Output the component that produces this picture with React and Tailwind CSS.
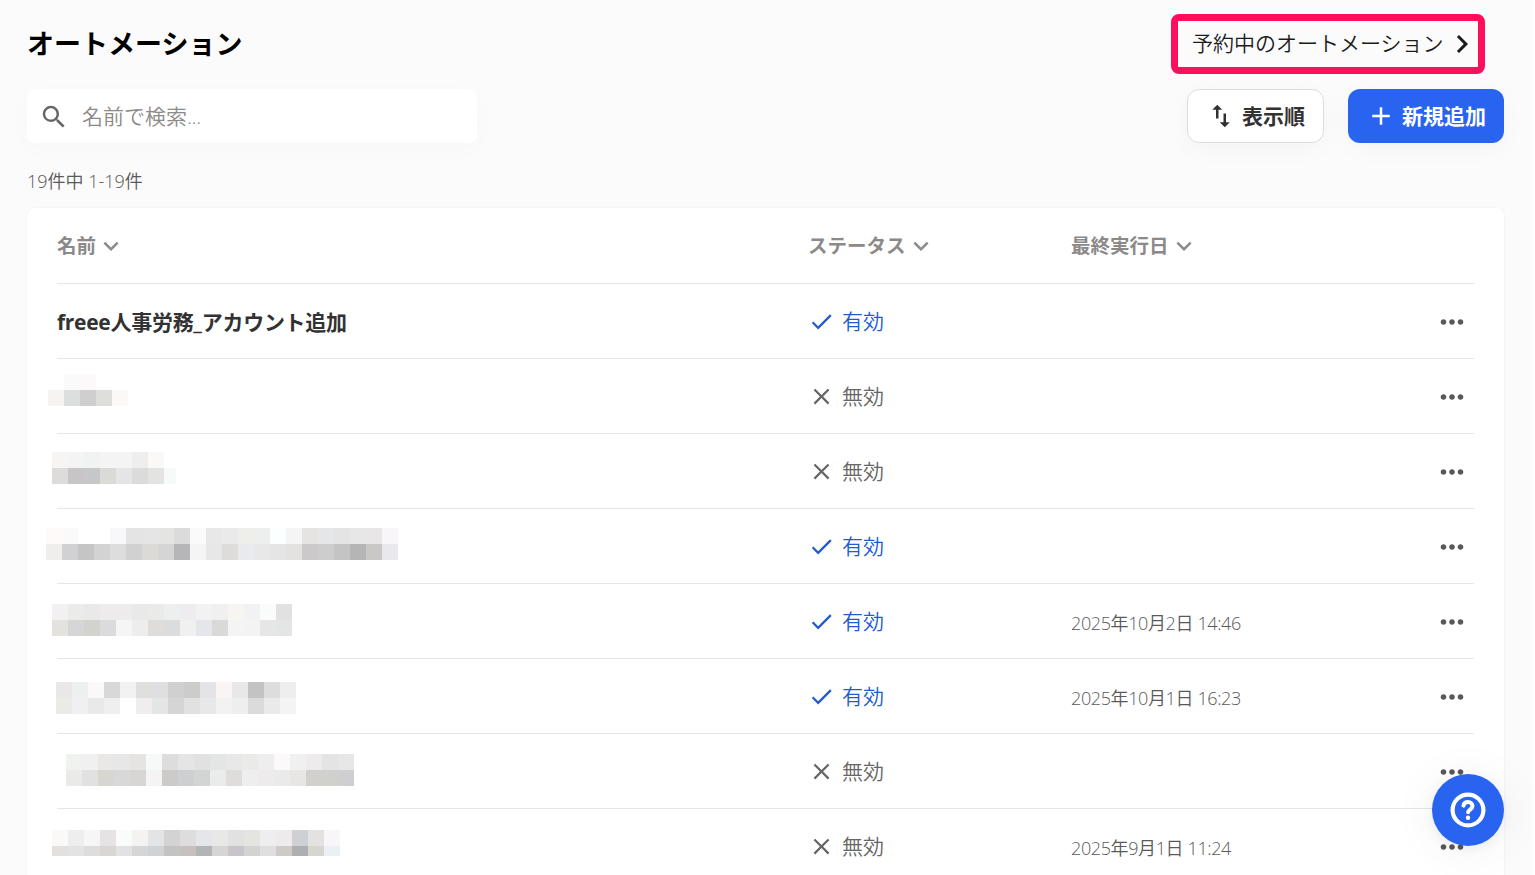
import {
  MdAdd,
  MdCheck,
  MdChevronRight,
  MdClose,
  MdKeyboardArrowDown,
  MdMoreHoriz,
  MdSearch,
  MdSwapVert,
} from "react-icons/md";

const GRID = "grid grid-cols-[751px_263px_1fr_45px] items-center border-b border-[#e6e6e6]";

// masked names are stored as rows of 16px cells
const rows = [
  { name: "freee人事労務_アカウント追加", active: true },
  {
    mask: {
      left: -9, top: 15, last: 16,
      cells: ["#ffffff #fafafa #fbf9fa #ffffff #ffffff", "#f5f4f2 #dcdfde #cfcfcf #dededc #faf9f7"],
    },
  },
  {
    mask: {
      left: -5, top: 18, last: 16,
      cells: [
        "#f6f5f3 #f4f4f4 #f1f2f2 #f4f4f4 #f4f4f4 #eeeeee #faf9f7 #ffffff",
        "#dddcda #c8c5c7 #c6c7c9 #dadad7 #e5e5e5 #dbdbdb #e3e3e1 #f6faf9",
      ],
      trim: true,
    },
  },
  {
    active: true,
    mask: {
      left: -11, top: 19, last: 16,
      cells: [
        "#fffafa #fafafa #ffffff #ffffff #f8f7fa #e4e4e4 #e5e5e5 #e4e4e2 #dbdbdb #fafafa #e8e8e8 #eaeaea #eeeeeb #edefee #fbffff #f5f5f5 #e5e4e2 #e5e6e8 #e4e4e4 #e7e7e7 #e8e6e7 #f8f6f9",
        "#efeeec #d1d1d3 #c5c5c5 #d3d3d3 #dddddd #d1d1d1 #dbdad7 #d5d5d5 #b6b6b8 #f5f5f5 #e7e7e7 #dddcda #e9eaed #e8e8e8 #e5e5e5 #e3e2e0 #ccc9ca #cdcdcd #c4c4c4 #b5b5b5 #c9c8c5 #e8e8ed",
      ],
    },
  },
  {
    active: true,
    date: "2025年10月2日 14:46",
    mask: {
      left: -5, top: 20, last: 16,
      cells: [
        "#f2f0f1 #ebebe9 #e9e9e9 #edebec #edebec #e9e9e9 #eaeae8 #edefee #eeecee #f2f2f2 #f0f0f0 #f6f5f2 #f2f2f2 #fafcfb #e1e1e1",
        "#e3e2df #d6d6d6 #d2d2cf #dbdbdc #f5f5f5 #ededed #dedddb #dadcde #f0f0f0 #e4e6e9 #d9d9d9 #f4f4f4 #f3f3f3 #e6e6e6 #e3e6e4",
      ],
    },
  },
  {
    active: true,
    date: "2025年10月1日 16:23",
    mask: {
      left: -1, top: 23, last: 16,
      cells: [
        "#e9e8e6 #edf0ef #faf9f7 #d8d8d8 #f2f2f2 #dfdfdd #dddfe1 #d0d0d0 #cdcccb #e4e4e8 #faf5f4 #e8e8e8 #c4c3c1 #dddddd #edefee",
        "#eaeae7 #f0f0f3 #e9e9e9 #edf0ef #ffffff #efeeec #e3e6e4 #d5d5d5 #e1e1e1 #e7e8ea #f2f2f2 #eeeeee #dbdbdb #e9ebea #f4f4f2",
      ],
    },
  },
  {
    mask: {
      left: 9, top: 20, last: 16,
      cells: [
        "#eff2ef #f0f0f0 #e9e8e6 #e7e7e7 #e5e4e2 #f5faf8 #dddddd #e5e5e5 #e1e1e1 #e4e6e5 #e8e8e8 #eaeae8 #eeeeee #fbf9fa #f0f0f0 #edebec #e4e4e4 #e7e7e7",
        "#eaeae8 #e1e1e1 #d7d6d1 #d8d8d8 #d7d6d4 #f4f4f4 #cccbc9 #cecfd2 #d3d5d4 #eaeceb #dfdddc #eeeeee #edebec #eaeaea #e7e6e4 #d1d0cd #d0d0cc #cfced3",
      ],
    },
  },
  {
    date: "2025年9月1日 11:24",
    mask: {
      left: -5, top: 21, last: 10,
      cells: [
        "#faf9f7 #eeeeee #f6f6f6 #e5e3e4 #fafcfb #f4f3f1 #e3e4e6 #d3d3d3 #dddddd #e5e6e9 #e8e8e8 #e1e1e1 #e4e4e1 #eeeeee #edebec #cfd0d3 #e3e2e0 #f8f6f9",
        "#e2e1df #e3e3e3 #dddddd #d9d7d6 #e2e2e5 #d6d6d6 #d1d2d4 #c3c3c3 #c6c1c0 #b3b4b6 #d5d5d5 #c7c5c9 #d3d3d3 #dfdfdf #cccbc8 #aeafb1 #d6d6d0 #ebf0f4",
      ],
    },
  },
];

function Mask({ left, top, last, cells, trim }) {
  return (
    <div style={{ marginLeft: left, paddingTop: top }}>
      {cells.map((line, row) => (
        <div key={row} className="flex" style={{ height: row === cells.length - 1 ? last : 16 }}>
          {line.split(" ").map((color, i, all) => (
            <span
              key={i}
              className="h-full"
              style={{ width: trim && i === all.length - 1 ? 12 : 16, backgroundColor: color }}
            />
          ))}
        </div>
      ))}
    </div>
  );
}

function HeaderCell({ children }) {
  return (
    <div className="flex items-center text-[19.5px] font-bold text-[#8c8989]">
      {children}
      <MdKeyboardArrowDown size={30} />
    </div>
  );
}

function Status({ active }) {
  const Icon = active ? MdCheck : MdClose;
  return (
    <div className={active ? "flex items-center text-[#205bd0]" : "flex items-center text-[#666464]"}>
      <Icon size={27} />
      <span className="ml-[7px] pt-[2px] text-[21px] font-[350]">{active ? "有効" : "無効"}</span>
    </div>
  );
}

function HelpButton() {
  return (
    <button className="absolute left-[1432px] top-[774px] flex size-[72px] items-center justify-center rounded-full bg-[#2864f0] shadow-[0_3px_36px_12px_rgba(0,0,0,0.03),0_3px_12px_rgba(0,0,0,0.06)]">
      <svg width="36" height="36" viewBox="0 0 36 36" fill="none" stroke="#fff" strokeLinecap="round">
        <circle cx="18" cy="18" r="15.4" strokeWidth="4.2" />
        <path d="M13.5 13.6C14 11.3 15.8 10.1 18 10.1c2.6 0 4.5 1.6 4.5 4 0 3.4-4.4 3.4-4.4 6.2" strokeWidth="4" />
        <circle cx="18" cy="25.8" r="2.2" fill="#fff" stroke="none" />
      </svg>
    </button>
  );
}

export default function App() {
  return (
    <div className="relative h-[875px] w-[1535px] overflow-hidden border-r-2 border-white bg-[#fbfbfb] pl-[27px] pr-[29px] pt-[14px] font-['Open_Sans','Noto_Sans_CJK_JP',sans-serif] text-[#323232]" lang="ja">
      <header className="flex h-[60px] items-center justify-between pr-[19px]">
        <h1 className="pb-[2px] text-[27px] font-bold leading-none text-black">オートメーション</h1>
        <a className="flex h-[60px] w-[314px] items-center rounded-lg border-[7px] border-[#ff0e5b] pl-[14px] text-[21px] font-[350] text-[#1c1c1c]">
          <span className="whitespace-nowrap">予約中のオートメーション</span>
          <MdChevronRight className="shrink-0" size={36} />
        </a>
      </header>

      <div className="mt-[15px] flex h-[54px] items-center justify-between">
        <div className="flex h-[54px] w-[450px] items-center rounded-lg bg-white pl-3 pt-px shadow-[0_6px_24px_rgba(80,20,20,0.02)]">
          <MdSearch className="text-[#666464]" size={30} />
          <span className="ml-[13px] pt-px text-[21px] font-[350] text-[#8c8989]">名前で検索<span className="tracking-[-0.4px]">...</span></span>
        </div>
        <div className="flex gap-6">
          <button className="flex h-[54px] w-[137px] items-center rounded-xl border border-[#dedcdc] bg-white pl-[18px] text-[21px] font-bold shadow-[0_6px_24px_rgba(80,20,20,0.03)]">
            <MdSwapVert size={30} />
            <span className="ml-[6px] pt-[2px]">表示順</span>
          </button>
          <button className="flex h-[54px] w-[156px] items-center rounded-xl bg-[#2864f0] pl-[18px] text-[21px] font-bold text-white shadow-[0_6px_24px_rgba(80,20,20,0.03)]">
            <MdAdd size={30} />
            <span className="ml-[6px] pt-[2px]">新規追加</span>
          </button>
        </div>
      </div>

      <p className="mt-[25px] h-[27px] text-[18px] font-[350] leading-[27px] text-[#595959]">19件中 1-19件</p>

      <main className="mt-[13px] rounded-lg bg-white px-[30px] shadow-[0_0_3px_rgba(0,0,0,0.06)]">
        <div className={`${GRID} h-[76px]`}>
          <HeaderCell>名前</HeaderCell>
          <HeaderCell>ステータス</HeaderCell>
          <HeaderCell>最終実行日</HeaderCell>
        </div>
        {rows.map(({ name, mask, active, date }, index) => (
          <div key={index} className={`${GRID} h-[75px]`}>
            {mask ? (
              <div className="h-full">
                <Mask {...mask} />
              </div>
            ) : (
              <span className="pt-[3px] text-[21px] font-bold tracking-[-0.28px]">{name}</span>
            )}
            <Status active={active} />
            <span className="pt-1 text-[18px] font-[350] tracking-[-0.38px] text-[#595959]">{date}</span>
            <MdMoreHoriz className="ml-[6px] mt-px text-[#595757]" size={34} />
          </div>
        ))}
      </main>

      <HelpButton />
    </div>
  );
}
